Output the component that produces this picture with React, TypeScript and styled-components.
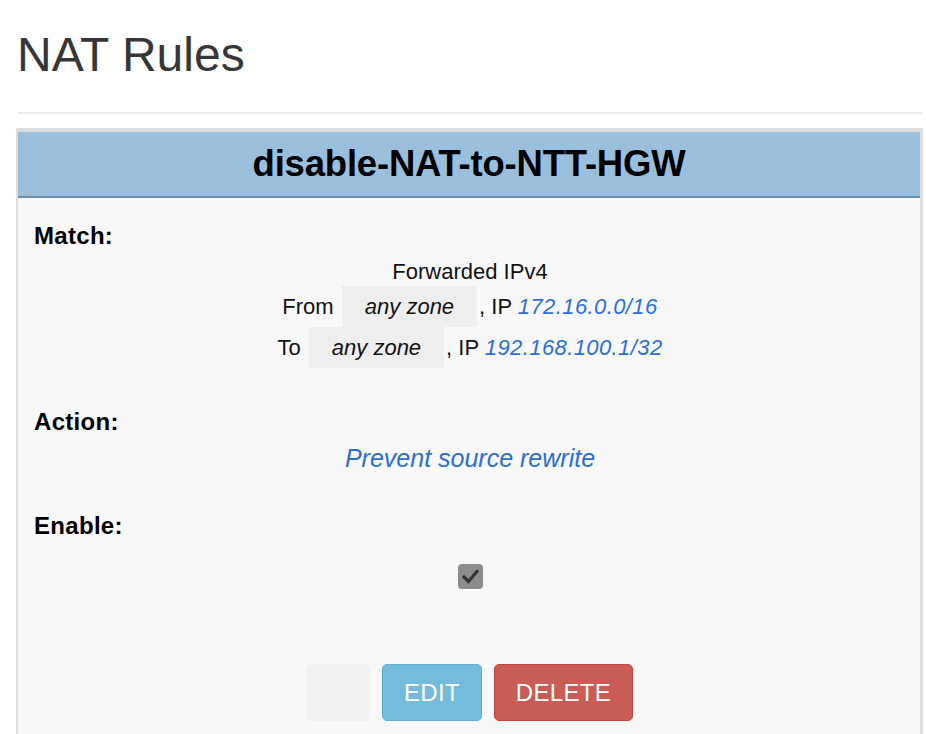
import React from "react";
import styled, { createGlobalStyle } from "styled-components";

const GlobalStyle = createGlobalStyle`
  html, body {
    margin: 0;
    padding: 0;
    background: #ffffff;
    font-family: "Liberation Sans", Arial, Helvetica, sans-serif;
    color: #111;
  }
`;

const Page = styled.div`
  padding: 0 3px 0 16px;
`;

const Title = styled.h1`
  margin: 31px 0 0 0;
  padding-left: 1px;
  font-size: 48px;
  line-height: 48px;
  font-weight: 400;
  color: #363636;
`;

const Rule = styled.hr`
  margin: 33px 1px 0 2px;
  border: 0;
  border-top: 2px solid #ececec;
  height: 0;
`;

const Card = styled.section`
  margin-top: 14px;
  border-style: solid;
  border-color: #dddddd;
  border-width: 4px 3px 0 2px;
  background: #f8f8f8;
`;

const CardHeader = styled.header`
  height: 64px;
  background: #9abfdd;
  border-bottom: 2px solid #6e8ba4;
  display: flex;
  align-items: center;
  justify-content: center;
`;

const CardTitle = styled.h2`
  margin: 0;
  font-size: 36.5px;
  font-weight: 700;
  letter-spacing: -0.2px;
  color: #000;
`;

const CardBody = styled.div`
  padding: 25px 16px 40px 16px;
`;

const Section = styled.div<{ $gap: number }>`
  margin-top: ${(p) => p.$gap}px;
`;

const Label = styled.div`
  font-size: 24px;
  line-height: 26px;
  font-weight: 700;
  letter-spacing: 0.3px;
  color: #000;
`;

const Content = styled.div<{ $space: number }>`
  margin-top: ${(p) => p.$space}px;
  display: flex;
  flex-direction: column;
  align-items: center;
  padding-left: 2px;
`;

const Line = styled.div`
  font-size: 22px;
  line-height: 26px;
  color: #111;
`;

const MatchRow = styled.div<{ $first?: boolean }>`
  display: flex;
  align-items: center;
  height: 41px;
  margin-top: ${(p) => (p.$first ? 1 : 0)}px;
  font-size: 22px;
  color: #111;
  white-space: pre;
`;

const Zone = styled.span`
  display: inline-flex;
  align-items: center;
  height: 100%;
  padding: 0 23px;
  margin: 0 2px 0 2px;
  background: #eeeeee;
  font-style: italic;
  color: #111;
`;

const Address = styled.span`
  font-style: italic;
  letter-spacing: 0.4px;
  color: #2b6fd4;
`;

const ActionText = styled.div`
  font-size: 25px;
  line-height: 30px;
  font-style: italic;
  color: #2b6fd4;
`;

const CheckBox = styled.span`
  width: 25px;
  height: 25px;
  border-radius: 4px;
  background: #8c8c8c;
  display: flex;
  align-items: center;
  justify-content: center;
`;

const Buttons = styled.div`
  margin-top: 75px;
  display: flex;
  justify-content: center;
  gap: 12px;
  padding-left: 1px;
`;

const Button = styled.button<{ $kind: "blank" | "edit" | "delete" }>`
  height: 57px;
  min-width: 64px;
  padding: 0 21px;
  border-radius: 5px;
  font-family: "Liberation Sans", Arial, sans-serif;
  font-size: 24px;
  letter-spacing: 0.3px;
  color: #ffffff;
  border: 1px solid
    ${(p) =>
      p.$kind === "edit" ? "#62b1d4" : p.$kind === "delete" ? "#c0463f" : "#f0f0f0"};
  background: ${(p) =>
    p.$kind === "edit" ? "#74bcdb" : p.$kind === "delete" ? "#c95c55" : "#f0f0f0"};
`;

export default function App() {
  return (
    <>
      <GlobalStyle />
      <Page>
        <Title>NAT Rules</Title>
        <Rule />
        <Card>
          <CardHeader>
            <CardTitle>disable-NAT-to-NTT-HGW</CardTitle>
          </CardHeader>
          <CardBody>
            <Section $gap={0}>
              <Label>Match:</Label>
              <Content $space={10}>
                <Line>Forwarded IPv4</Line>
                <MatchRow $first>
                  From <Zone>any zone</Zone>, IP <Address>172.16.0.0/16</Address>
                </MatchRow>
                <MatchRow>
                  To <Zone>any zone</Zone>, IP <Address>192.168.100.1/32</Address>
                </MatchRow>
              </Content>
            </Section>
            <Section $gap={41}>
              <Label>Action:</Label>
              <Content $space={8}>
                <ActionText>Prevent source rewrite</ActionText>
              </Content>
            </Section>
            <Section $gap={40}>
              <Label>Enable:</Label>
              <Content $space={25}>
                <CheckBox>
                  <svg width="17" height="15" viewBox="0 0 17 15">
                    <polyline
                      points="2,8 6.5,12.5 15,2.5"
                      fill="none"
                      stroke="#333"
                      strokeWidth="3.2"
                      strokeLinecap="square"
                    />
                  </svg>
                </CheckBox>
              </Content>
            </Section>
            <Buttons>
              <Button $kind="blank" />
              <Button $kind="edit">EDIT</Button>
              <Button $kind="delete">DELETE</Button>
            </Buttons>
          </CardBody>
        </Card>
      </Page>
    </>
  );
}
